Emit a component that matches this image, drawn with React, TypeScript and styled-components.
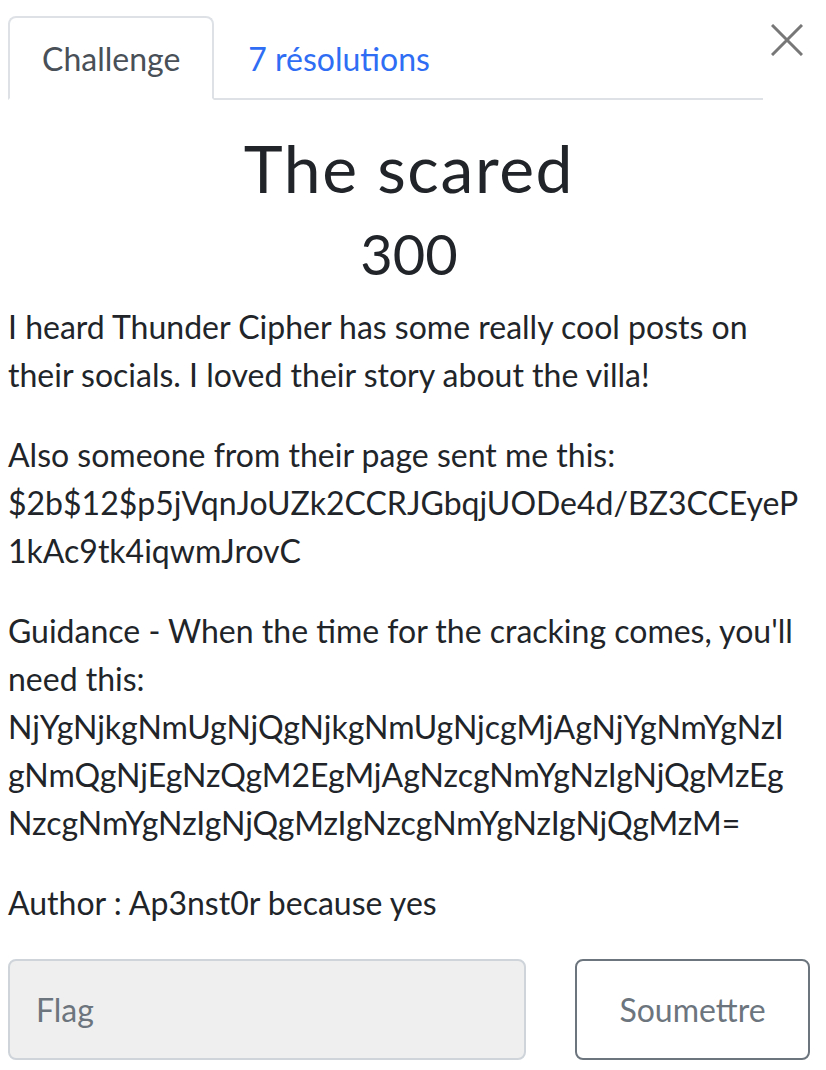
import React from "react";
import styled, { createGlobalStyle } from "styled-components";

const GlobalStyle = createGlobalStyle`
  html, body {
    margin: 0;
    padding: 0;
    background: #ffffff;
  }
  body {
    font-family: Lato, "Open Sans", sans-serif;
    color: #212529;
  }
  * { box-sizing: border-box; }
`;

const Modal = styled.div`
  width: 826px;
  padding: 0 16px 0 8px;
`;

const Header = styled.div`
  display: flex;
  align-items: flex-start;
  gap: 8px;
`;

const Nav = styled.nav`
  flex: 1;
  display: flex;
  margin-top: 16px;
  border-bottom: 2px solid #dee2e6;
`;

const Tab = styled.a<{ $active?: boolean }>`
  display: flex;
  align-items: center;
  height: 84px;
  margin-bottom: -2px;
  padding: 0 32px;
  font-size: 32px;
  text-decoration: none;
  border: 2px solid ${(p) => (p.$active ? "#dee2e6" : "transparent")};
  border-bottom-color: ${(p) => (p.$active ? "#ffffff" : "transparent")};
  border-radius: 8px 8px 0 0;
  background: ${(p) => (p.$active ? "#ffffff" : "transparent")};
  color: ${(p) => (p.$active ? "#495057" : "#2f6ef4")};
`;

const CloseButton = styled.button`
  width: 32px;
  height: 32px;
  margin-top: 24px;
  margin-right: 7px;
  padding: 0;
  border: none;
  background: transparent;
  display: flex;
  align-items: center;
  justify-content: center;
`;

const Title = styled.h2`
  margin: 28px 0 0;
  text-align: center;
  font-size: 66px;
  font-weight: 400;
  line-height: 1.2;
  letter-spacing: 1.6px;
`;

const Points = styled.h3`
  margin: 13px 0 0;
  text-align: center;
  font-size: 56px;
  font-weight: 400;
  line-height: 1.2;
`;

const Description = styled.div`
  margin-top: 16px;
  font-size: 32px;
  line-height: 48px;
  overflow-wrap: break-word;
`;

const Para = styled.p`
  margin: 0 0 32px;
`;

const FlagForm = styled.form`
  display: flex;
  gap: 49px;
  margin-top: 1px;
`;

const FlagInput = styled.input`
  flex: 1;
  height: 101px;
  padding: 0 26px;
  font-family: Lato, sans-serif;
  font-size: 32px;
  color: #495057;
  background: #efefef;
  border: 2px solid #ced4da;
  border-radius: 8px;
  outline: none;
  &::placeholder {
    color: #6c757d;
    opacity: 1;
  }
`;

const SubmitButton = styled.button`
  width: 235px;
  height: 101px;
  font-family: Lato, sans-serif;
  font-size: 32px;
  color: #6c757d;
  background: #ffffff;
  border: 2px solid #6c757d;
  border-radius: 8px;
`;

const guidanceCode = [
  "NjYgNjkgNmUgNjQgNjkgNmUgNjcgMjAgNjYgNmYgNzI",
  "gNmQgNjEgNzQgM2EgMjAgNzcgNmYgNzIgNjQgMzEg",
  "NzcgNmYgNzIgNjQgMzIgNzcgNmYgNzIgNjQgMzM=",
];

export default function App() {
  return (
    <>
      <GlobalStyle />
      <Modal>
        <Header>
          <Nav>
            <Tab $active>Challenge</Tab>
            <Tab>7 résolutions</Tab>
          </Nav>
          <CloseButton aria-label="Close">
            <svg width="32" height="32" viewBox="0 0 32 32">
              <path d="M1 1 L31 31 M31 1 L1 31" stroke="#777777" strokeWidth="3" />
            </svg>
          </CloseButton>
        </Header>
        <Title>The scared</Title>
        <Points>300</Points>
        <Description>
          <Para>
            I heard Thunder Cipher has some really cool posts on their socials. I loved their story about the villa!
          </Para>
          <Para>
            Also someone from their page sent me this: $2b$12$p5jVqnJoUZk2CCRJGbqjUODe4d/BZ3CCEyeP1kAc9tk4iqwmJrovC
          </Para>
          <Para>
            Guidance - When the time for the cracking comes, you'll need this:{" "}
            {guidanceCode.map((part, i) => (
              <React.Fragment key={i}>
                {i > 0 && <br />}
                {part}
              </React.Fragment>
            ))}
          </Para>
          <Para>Author : Ap3nst0r because yes</Para>
        </Description>
        <FlagForm onSubmit={(e) => e.preventDefault()}>
          <FlagInput placeholder="Flag" />
          <SubmitButton type="submit">Soumettre</SubmitButton>
        </FlagForm>
      </Modal>
    </>
  );
}
